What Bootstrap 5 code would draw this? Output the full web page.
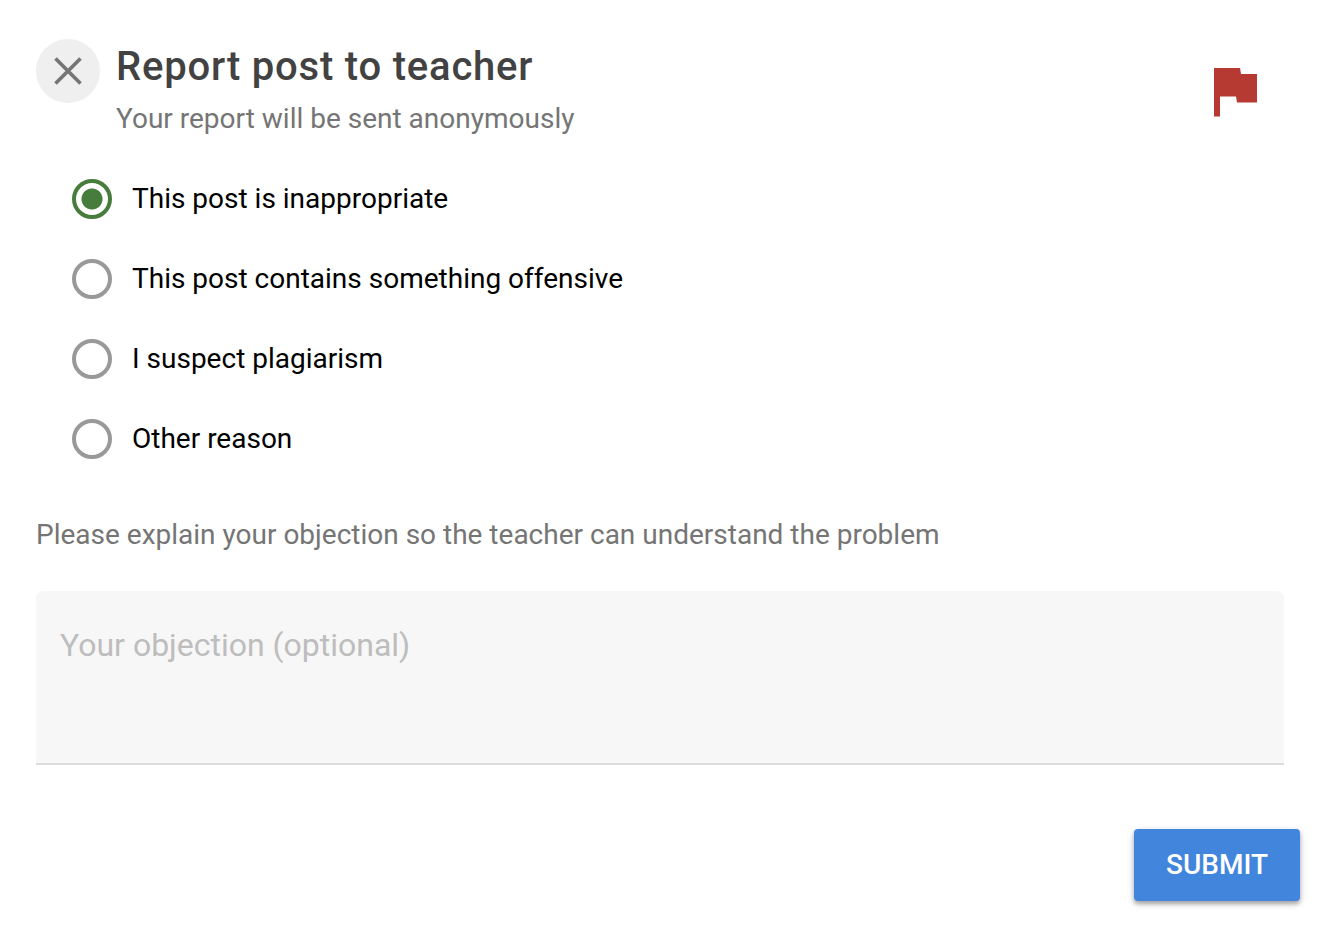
<!DOCTYPE html>
<html lang="en">
<head>
<meta charset="utf-8">
<meta name="viewport" content="width=device-width, initial-scale=1">
<title>Report post to teacher</title>
<link href="https://cdn.jsdelivr.net/npm/bootstrap@5.3.0/dist/css/bootstrap.min.css" rel="stylesheet">
<style>
body { font-family: Roboto, "Liberation Sans", sans-serif; font-size: 28px; line-height: 40px; color: #000; background: #fff; }
.report-form { padding: 39px 44px 24px 36px; }
.close-btn { width: 64px; height: 64px; background: #efefef; color: #757575; }
.report-title { font-size: 40px; line-height: 56px; font-weight: 500; letter-spacing: .02em; color: #424242; }
.muted-text { color: #757575; }
.flag-icon { margin: 29px 27px 0 0; }
.reasons { padding-left: 36px; margin-top: 40px; gap: 40px; }
.reason-label { padding-left: 20px; }
.reasons .form-check-input { width: 40px; height: 40px; border: 4px solid #999; margin: 0; float: none; background: #fff; }
.reasons .form-check-input:checked { border-color: #467d3c; background: radial-gradient(circle, #467d3c 10px, #fff 11px); }
.explain { margin-top: 56px; }
.objection { height: 174px; margin-top: 36px; padding: 32px 24px; font-size: 32px; line-height: 44px; background: #f7f7f7; border: 0; border-bottom: 2px solid #ddd; border-radius: 8px 8px 0 0; resize: none; }
.objection::placeholder { color: #bdbdbd; }
.submit-btn { margin: 64px -16px 0 0; height: 72px; padding: 0 32px; font-size: 28px; font-weight: 500; color: #fff; background: #4285dc; border: 0; border-radius: 4px; box-shadow: 0 3px 4px rgba(0,0,0,.3), 0 2px 10px rgba(0,0,0,.12); }
</style>
</head>
<body>
<form class="report-form">
  <header class="d-flex align-items-start">
    <button type="button" class="close-btn btn rounded-circle border-0 p-0 d-flex align-items-center justify-content-center flex-shrink-0" aria-label="Close">
      <svg width="28" height="28" viewBox="0 0 28 28" fill="none" stroke="currentColor" stroke-width="3.700"><path d="M1.500 1.500l25 25M26.500 1.500l-25 25"/></svg>
    </button>
    <div class="ms-3 flex-grow-1">
      <h1 class="report-title mb-1">Report post to teacher</h1>
      <p class="muted-text mb-0">Your report will be sent anonymously</p>
    </div>
    <svg class="flag-icon flex-shrink-0" width="43" height="49" viewBox="0 0 43 49" fill="#b73a32" aria-hidden="true"><path d="M0 0h26l1 6h16v28.500H23l-1-6H6v20H0z"/></svg>
  </header>
  <div class="reasons d-flex flex-column" role="radiogroup" aria-label="Reason">
    <div class="d-flex align-items-center"><input class="form-check-input flex-shrink-0" type="radio" name="reason" id="r1" checked><label class="reason-label" for="r1">This post is inappropriate</label></div>
    <div class="d-flex align-items-center"><input class="form-check-input flex-shrink-0" type="radio" name="reason" id="r2"><label class="reason-label" for="r2">This post contains something offensive</label></div>
    <div class="d-flex align-items-center"><input class="form-check-input flex-shrink-0" type="radio" name="reason" id="r3"><label class="reason-label" for="r3">I suspect plagiarism</label></div>
    <div class="d-flex align-items-center"><input class="form-check-input flex-shrink-0" type="radio" name="reason" id="r4"><label class="reason-label" for="r4">Other reason</label></div>
  </div>
  <label class="explain muted-text d-block" for="objection">Please explain your objection so the teacher can understand the problem</label>
  <textarea class="objection form-control" id="objection" placeholder="Your objection (optional)"></textarea>
  <div class="d-flex justify-content-end"><button type="submit" class="submit-btn btn">SUBMIT</button></div>
</form>
<script src="https://cdn.jsdelivr.net/npm/bootstrap@5.3.0/dist/js/bootstrap.bundle.min.js"></script>
</body>
</html>
